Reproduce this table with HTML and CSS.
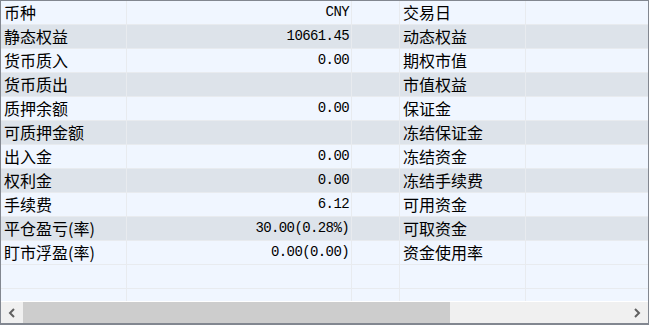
FILE: index.html
```html
<!DOCTYPE html>
<html lang="zh-CN">
<head>
<meta charset="utf-8">
<title>资金</title>
<link rel="stylesheet" href="styles.css">
</head>
<body>
<div class="panel">
  <div class="grid">
    <div class="row light"><div class="c c1">币种</div><div class="c c2 num">CNY</div><div class="c c3"></div><div class="c c4">交易日</div><div class="c c5"></div></div>
    <div class="row dark"><div class="c c1">静态权益</div><div class="c c2 num">10661.45</div><div class="c c3"></div><div class="c c4">动态权益</div><div class="c c5"></div></div>
    <div class="row light"><div class="c c1">货币质入</div><div class="c c2 num">0.00</div><div class="c c3"></div><div class="c c4">期权市值</div><div class="c c5"></div></div>
    <div class="row dark"><div class="c c1">货币质出</div><div class="c c2 num"></div><div class="c c3"></div><div class="c c4">市值权益</div><div class="c c5"></div></div>
    <div class="row light"><div class="c c1">质押余额</div><div class="c c2 num">0.00</div><div class="c c3"></div><div class="c c4">保证金</div><div class="c c5"></div></div>
    <div class="row dark"><div class="c c1">可质押金额</div><div class="c c2 num"></div><div class="c c3"></div><div class="c c4">冻结保证金</div><div class="c c5"></div></div>
    <div class="row light"><div class="c c1">出入金</div><div class="c c2 num">0.00</div><div class="c c3"></div><div class="c c4">冻结资金</div><div class="c c5"></div></div>
    <div class="row dark"><div class="c c1">权利金</div><div class="c c2 num">0.00</div><div class="c c3"></div><div class="c c4">冻结手续费</div><div class="c c5"></div></div>
    <div class="row light"><div class="c c1">手续费</div><div class="c c2 num">6.12</div><div class="c c3"></div><div class="c c4">可用资金</div><div class="c c5"></div></div>
    <div class="row dark"><div class="c c1">平仓盈亏(率)</div><div class="c c2 num">30.00(0.28%)</div><div class="c c3"></div><div class="c c4">可取资金</div><div class="c c5"></div></div>
    <div class="row light"><div class="c c1">盯市浮盈(率)</div><div class="c c2 num">0.00(0.00)</div><div class="c c3"></div><div class="c c4">资金使用率</div><div class="c c5"></div></div>
    <div class="row light"><div class="c c1"></div><div class="c c2"></div><div class="c c3"></div><div class="c c4"></div><div class="c c5"></div></div>
    <div class="row light last"><div class="c c1"></div><div class="c c2"></div><div class="c c3"></div><div class="c c4"></div><div class="c c5"></div></div>
  </div>
  <div class="hscroll">
    <div class="arrow left"><svg width="8" height="10" viewBox="0 0 8 10"><path d="M6 1 L2 5 L6 9" fill="none" stroke="#606060" stroke-width="2"/></svg></div>
    <div class="track"><div class="thumb"></div></div>
    <div class="arrow right"><svg width="8" height="10" viewBox="0 0 8 10"><path d="M2 1 L6 5 L2 9" fill="none" stroke="#606060" stroke-width="2"/></svg></div>
  </div>
</div>
</body>
</html>
```
FILE: styles.css
```css
html, body {
  margin: 0;
  padding: 0;
  background: #ffffff;
}
.panel {
  width: 649px;
  height: 325px;
  box-sizing: border-box;
  border: 1px solid #828790;
  border-bottom-width: 2px;
  background: #f0f6ff;
  display: flex;
  flex-direction: column;
  overflow: hidden;
  font-family: "Noto Sans CJK SC", sans-serif;
  font-size: 16px;
  color: #000;
}
.grid {
  height: 300px;
  overflow: hidden;
  border-bottom: 1px solid #ffffff;
}
.row {
  display: grid;
  grid-template-columns: 126px 225px 48px 126px 120px;
  height: 24px;
  box-sizing: border-box;
  border-bottom: 1px solid #e8ebef;
}
.row.light { background: #f0f6ff; }
.row.dark { background: #dde3ea; }
.row.last { border-bottom: none; }
.c {
  border-right: 1px solid #e8ebef;
  padding: 0 3px;
  line-height: 23px;
  white-space: nowrap;
  overflow: hidden;
}
.c5 { border-right: none; }
.num {
  text-align: right;
  font-family: "Liberation Mono", monospace;
  font-size: 14px;
  letter-spacing: -0.6px;
  padding-right: 2px;
}
.hscroll {
  height: 21px;
  display: flex;
  background: #f0f0f0;
}
.arrow {
  width: 22px;
  display: flex;
  align-items: center;
  justify-content: center;
}
.track {
  flex: 1;
  display: flex;
}
.thumb {
  width: 427px;
  background: #cdcdcd;
}
```
